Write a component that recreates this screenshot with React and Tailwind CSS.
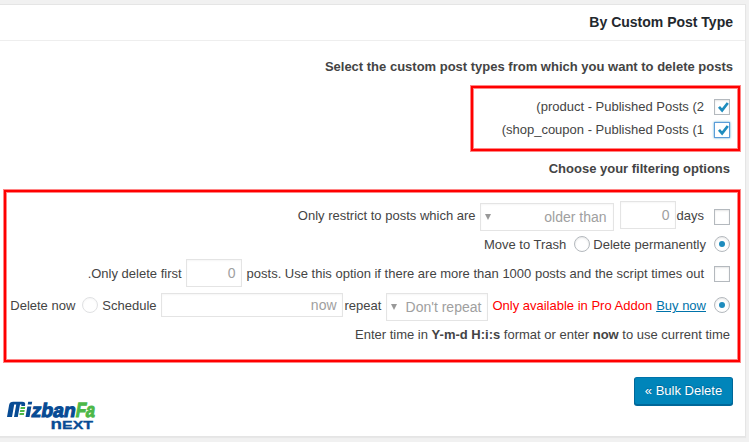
const frame =
  'border-2 border-[#ff0000] shadow-[0_0_0_1px_#ff8585,inset_0_0_0_1px_#ff8585]';

const field =
  'box-border flex shrink-0 items-center border border-[#e4e4e4] bg-white text-[#a0a0a0] shadow-[inset_0_1px_2px_rgba(0,0,0,0.04)]';

function Checkbox({ checked = false, focused = false }) {
  return (
    <span
      className={
        'relative block h-4 w-4 shrink-0 border bg-white ' +
        (focused
          ? 'border-[#5b9dd9] shadow-[0_0_2px_rgba(30,140,190,0.8)]'
          : 'border-[#b4b9be] shadow-[inset_0_1px_2px_rgba(0,0,0,0.1)]')
      }
    >
      {checked && (
        <svg className="absolute left-[2px] top-[1px] h-[12px] w-[12px]" viewBox="0 0 12 12">
          <path d="M2 5.8 L5.1 9.3 L10.8 2" fill="none" stroke="#1e8cbe" strokeWidth="2.7" />
        </svg>
      )}
    </span>
  );
}

function Radio({ checked = false, faded = false }) {
  return (
    <span
      className={
        'flex h-4 w-4 shrink-0 items-center justify-center rounded-full border bg-white ' +
        (faded
          ? 'border-[#e0e1e3] shadow-[inset_0_1px_2px_rgba(0,0,0,0.04)]'
          : 'border-[#b4b9be] shadow-[inset_0_1px_2px_rgba(0,0,0,0.1)]')
      }
    >
      {checked && <span className="h-1.5 w-1.5 rounded-full bg-[#1e8cbe]" />}
    </span>
  );
}

function Caret() {
  return (
    <svg className="h-[6px] w-[6px] shrink-0" viewBox="0 0 6 6">
      <path d="M0 0 H6 L3 6 Z" fill="#999" />
    </svg>
  );
}

function Logo() {
  return (
    <svg
      className="mt-[38px] h-[32px] w-[100px] overflow-visible"
      viewBox="0 0 100 32"
      fontFamily="Liberation Sans, sans-serif"
      fontWeight="700"
    >
      <g transform="translate(0 17) skewX(-10)">
        <path
          d="M0 0 V-12 Q0 -15.3 3.5 -15.3 H12.5 Q16 -15.3 16 -12 V-11 H12.3 V-12.6 H10.8 V0 H7 V-12.6 H5 V0 Z"
          fill="#074b94"
        />
        <path d="M12 -9 H16.5 M12 -6 H16.5 M12 -3 H16.5" stroke="#4db848" strokeWidth="1.8" />
        <path d="M18.5 -10.6 H22.5 V0 H18.5 Z M18.5 -15.3 H22.5 V-12.5 H18.5 Z" fill="#074b94" />
        <text
          x="23.8"
          y="-0.5"
          fontSize="19.5"
          fill="#074b94"
          stroke="#074b94"
          strokeWidth="1.1"
          textLength="44"
          lengthAdjust="spacingAndGlyphs"
        >
          zban
        </text>
        <text
          x="68"
          y="-0.5"
          fontSize="20.5"
          fill="#4db848"
          stroke="#4db848"
          strokeWidth="1.1"
          textLength="19"
          lengthAdjust="spacingAndGlyphs"
        >
          Fa
        </text>
      </g>
      <g fill="#074b94" stroke="#074b94" strokeWidth="0.3">
        <text x="43.5" y="29" fontSize="15" textLength="11.5" lengthAdjust="spacingAndGlyphs">
          n
        </text>
        <text x="55" y="29" fontSize="11.8" textLength="31" lengthAdjust="spacingAndGlyphs">
          EXT
        </text>
      </g>
    </svg>
  );
}

export default function App() {
  return (
    <div className="h-[442px] w-[749px] overflow-hidden bg-[#f1f1f1] pt-1 font-['Liberation_Sans',Arial,sans-serif] text-[13px] leading-[18px] whitespace-nowrap text-[#444]">
      <main className="flex h-[433px] w-[746px] flex-col border-y border-r border-[#e5e5e5] bg-white shadow-[0_1px_1px_rgba(0,0,0,0.04)]">
        <header className="flex h-9 shrink-0 items-center justify-end border-b border-[#eee] pr-3 pb-[2px]">
          <h1 className="text-[14px] font-bold text-[#23282d]">By Custom Post Type</h1>
        </header>

        <h2 className="mt-[17px] mr-3 h-[18px] text-right font-bold">
          Select the custom post types from which you want to delete posts
        </h2>

        <section className={'mt-[10px] ml-[471px] flex h-[65px] w-[269px] shrink-0 flex-col gap-px pt-2 pr-2 ' + frame}>
          <label className="flex h-[22px] items-center justify-end gap-[10px]">
            <span>(product - Published Posts (2</span>
            <Checkbox checked />
          </label>
          <label className="flex h-[22px] items-center justify-end gap-[10px]">
            <span>(shop_coupon - Published Posts (1</span>
            <Checkbox checked focused />
          </label>
        </section>

        <h2 className="mt-[9px] mr-[15px] h-[18px] text-right font-bold">Choose your filtering options</h2>

        <section className={'mt-3 ml-1 flex h-[172px] w-[736px] shrink-0 flex-col pt-2 pr-2 ' + frame}>
          <div className="flex h-[32px] items-center justify-end">
            <span>Only restrict to posts which are</span>
            <div className={field + ' ml-1 mt-[2px] h-7 w-[134px] justify-between pr-1.5 pl-1 text-[14px]'}>
              <Caret />
              <span>older than</span>
            </div>
            <div className={field + ' ml-1.5 mb-[2px] h-7 w-14 justify-end pr-[5px] text-[14px]'}>0</div>
            <span className="ml-px">days</span>
            <span className="mt-[2px] ml-[10px]">
              <Checkbox />
            </span>
          </div>

          <div className="mb-px flex h-6 items-center justify-end">
            <span className="mt-[2px]">Move to Trash</span>
            <span className="ml-2">
              <Radio />
            </span>
            <span className="mt-[2px] ml-[3px]">Delete permanently</span>
            <span className="ml-2">
              <Radio checked />
            </span>
          </div>

          <div className="flex h-8 items-center justify-end">
            <span className="mt-[2px]">.Only delete first</span>
            <div className={field + ' ml-1 h-7 w-14 justify-end pr-[5px] text-[14px]'}>0</div>
            <span className="mt-[2px] ml-[5px]">
              posts. Use this option if there are more than 1000 posts and the script times out
            </span>
            <span className="mt-[2px] ml-[10px]">
              <Checkbox />
            </span>
          </div>

          <div className="flex h-8 items-center justify-end">
            <span className="mt-[2px]">Delete now</span>
            <span className="ml-[7px]">
              <Radio faded />
            </span>
            <span className="mt-[2px] ml-1">Schedule</span>
            <div className={field + ' ml-[4px] h-6 w-[182px] justify-end pr-[5px] text-[14px]'}>now</div>
            <span className="mt-[2px] ml-[2px]">repeat</span>
            <div className={field + ' ml-[5px] mt-[4px] h-7 w-[102px] justify-between pr-1.5 pl-1 text-[14px]'}>
              <Caret />
              <span>Don't repeat</span>
            </div>
            <span className="mt-[2px] ml-1 text-[#ff0000]">Only available in Pro Addon</span>
            <a className="mt-[2px] ml-1 text-[#0073aa] underline">Buy now</a>
            <span className="ml-2">
              <Radio checked />
            </span>
          </div>

          <p className="mt-[5px] text-right">
            Enter time in <b>Y-m-d H:i:s</b> format or enter <b>now</b> to use current time
          </p>
        </section>

        <footer className="flex items-start justify-between pr-3 pl-[7px]">
          <Logo />
          <button className="mt-[15px] h-[28px] w-[99px] rounded-[3px] border border-[#006799] border-t-[#0073aa] bg-[#0085ba] pb-px text-[13px] text-white shadow-[0_1px_0_#006799] [text-shadow:0_-1px_1px_#006799]">
            « Bulk Delete
          </button>
        </footer>
      </main>
    </div>
  );
}
